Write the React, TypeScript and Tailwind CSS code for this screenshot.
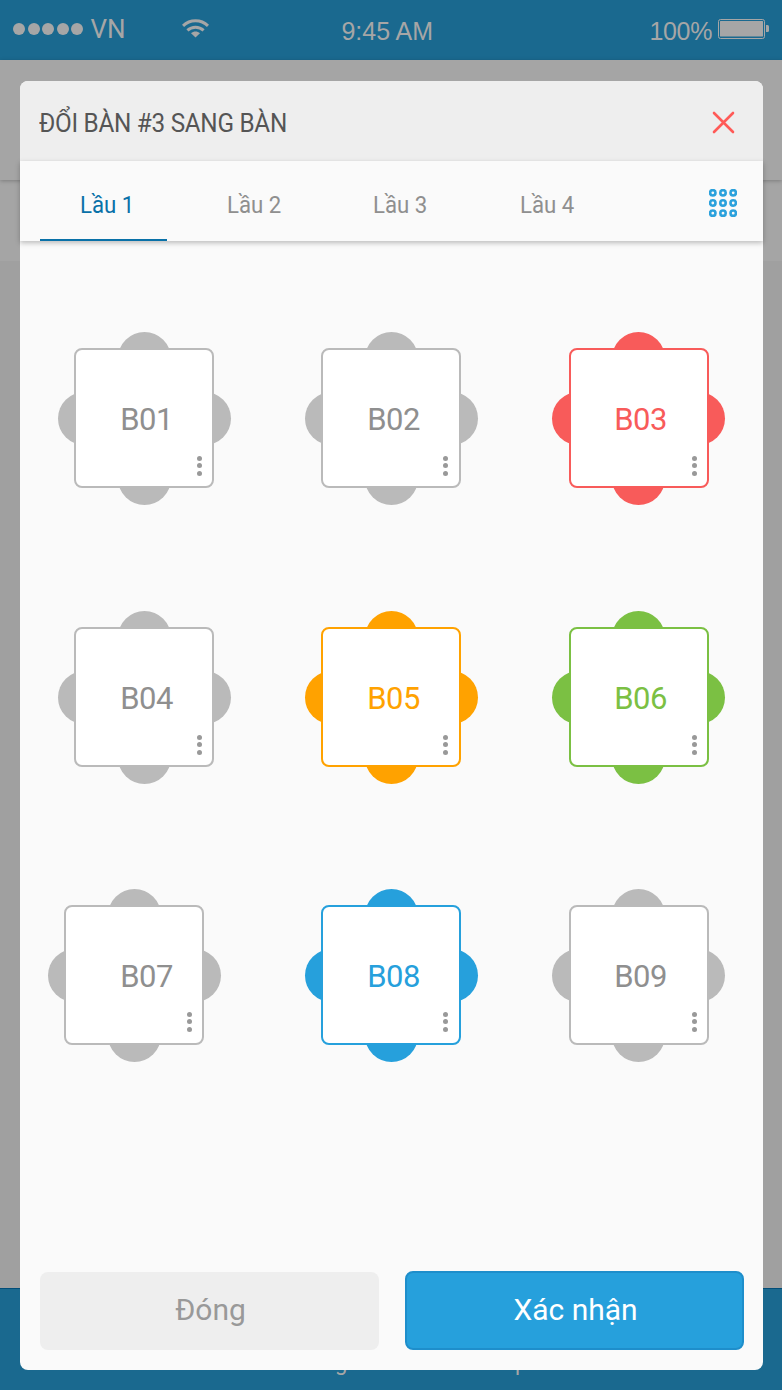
type Tone = "free" | "red" | "orange" | "green" | "blue";

type TableInfo = {
  name: string;
  tone: Tone;
  square: string;
  label: string;
  dots: string;
};

const tones: Record<Tone, { chair: string; border: string; text: string }> = {
  free: { chair: "bg-[#bababa]", border: "border-[#bababa]", text: "text-[#8f8f8f]" },
  red: { chair: "bg-[#f85b5a]", border: "border-[#f85b5a]", text: "text-[#f85b5a]" },
  orange: { chair: "bg-[#ffa200]", border: "border-[#ffa200]", text: "text-[#ffa200]" },
  green: { chair: "bg-[#7bc043]", border: "border-[#7bc043]", text: "text-[#7bc043]" },
  blue: { chair: "bg-[#26a0dc]", border: "border-[#26a0dc]", text: "text-[#26a0dc]" },
};

const tables: TableInfo[] = [
  { name: "B01", tone: "free", square: "ml-4", label: "pl-[5px]", dots: "right-[10px] bottom-[10px]" },
  { name: "B02", tone: "free", square: "ml-4", label: "pl-[5px]", dots: "right-[11px] bottom-[10px]" },
  { name: "B03", tone: "red", square: "ml-[17px]", label: "pl-[3px]", dots: "right-[10px] bottom-[10px]" },
  { name: "B04", tone: "free", square: "ml-4", label: "pl-[5px]", dots: "right-[10px] bottom-[10px]" },
  { name: "B05", tone: "orange", square: "ml-4", label: "pl-[5px]", dots: "right-[11px] bottom-[10px]" },
  { name: "B06", tone: "green", square: "ml-[17px]", label: "pl-[3px]", dots: "right-[10px] bottom-[10px]" },
  { name: "B07", tone: "free", square: "ml-4", label: "pl-[25px]", dots: "right-[10px] bottom-[11px]" },
  { name: "B08", tone: "blue", square: "ml-4", label: "pl-[5px]", dots: "right-[11px] bottom-[11px]" },
  { name: "B09", tone: "free", square: "ml-[17px]", label: "pl-[3px]", dots: "right-[10px] bottom-[11px]" },
];

const floors = ["Lầu 1", "Lầu 2", "Lầu 3", "Lầu 4"];

function StatusBar() {
  return (
    <header className="flex h-[60px] items-start bg-[#1a698f] text-[#a6a6a6]">
      <div className="mt-[23px] ml-[13px] flex gap-[2.6px]">
        {[0, 1, 2, 3, 4].map((n) => (
          <span key={n} className="size-3 rounded-full bg-[#a6a6a6]" />
        ))}
      </div>
      <span className="mt-[14px] ml-[7px] w-[92px] text-[26px] leading-[30px]">VN</span>
      <svg className="mt-[18px] h-5 w-[27px]" viewBox="0 0 27 20" fill="none" stroke="#a6a6a6" strokeWidth="3">
        <path d="M1 7.8C8 1 19 1 26 7.8" />
        <path d="M5.4 12.400C10 8.200 17 8.200 21.6 12.400" />
        <path d="M9 15.2c2.700-2.300 6.300-2.300 9 0L13.500 19.600Z" fill="#a6a6a6" stroke="none" />
      </svg>
      <span className="mt-4 ml-[132px] w-[308px] font-['Liberation_Sans',sans-serif] text-[25px] leading-[30px]">
        9:45 AM
      </span>
      <span className="mt-4 w-[69px] font-['Liberation_Sans',sans-serif] text-[25px] leading-[30px] tracking-[-0.3px]">
        100%
      </span>
      <svg className="mt-[19px] h-5 w-[51px]" viewBox="0 0 51 20">
        <rect x=".5" y=".5" width="46" height="19" rx="2" fill="none" stroke="#a6a6a6" />
        <rect x="2" y="2" width="43" height="15.500" rx=".5" fill="#a6a6a6" />
        <path d="M48 6h1.500a1.500 1.500 0 0 1 1.500 1.500v4a1.500 1.500 0 0 1-1.500 1.500H48Z" fill="#a6a6a6" />
      </svg>
    </header>
  );
}

function Table({ name, tone, square, label, dots }: TableInfo) {
  const c = tones[tone];
  return (
    <div className={`relative size-[173px] pt-4 ${name === "B07" ? "-ml-[10px]" : ""}`}>
      <span className={`absolute top-0 left-[60px] size-[53px] rounded-full ${c.chair}`} />
      <span className={`absolute bottom-0 left-[60px] size-[53px] rounded-full ${c.chair}`} />
      <span className={`absolute top-[60px] left-0 size-[53px] rounded-full ${c.chair}`} />
      <span className={`absolute top-[60px] right-0 size-[53px] rounded-full ${c.chair}`} />
      <div
        className={`relative flex size-[140px] items-center justify-center rounded-lg border-2 bg-white ${c.border} ${square}`}
      >
        <span className={`pt-[3px] text-[31px] leading-9 tracking-[-0.5px] ${c.text} ${label}`}>{name}</span>
        <div className={`absolute flex flex-col gap-[2.6px] ${dots}`}>
          <span className="size-[5px] rounded-full bg-[#999]" />
          <span className="size-[5px] rounded-full bg-[#999]" />
          <span className="size-[5px] rounded-full bg-[#999]" />
        </div>
      </div>
    </div>
  );
}

export default function App() {
  return (
    <div className="relative flex h-[1390px] w-[782px] flex-col overflow-hidden bg-[#a0a0a0] font-['Roboto',sans-serif]">
      <StatusBar />
      <div className="relative h-[120px] bg-[#a5a5a5] shadow-[0_1px_4px_rgba(0,0,0,0.25)]" />
      <div className="h-[81px] bg-[#a5a5a5]" />
      <div className="flex-1" />
      <footer className="flex h-[102px] items-end border-t border-[#024d78] bg-[#1a698f] text-[22px] leading-[30px] text-[#a6a6a6]">
        <span className="mb-[12px] ml-[335px] w-[180px]">g</span>
        <span className="mb-[12px]">p</span>
      </footer>

      <section className="absolute top-[81px] left-5 flex h-[1289px] w-[743px] flex-col rounded-lg bg-[#fafafa]">
        <div className="flex h-20 items-center justify-between rounded-t-lg bg-[#eee] pr-7 pl-[19px]">
          <h1 className="origin-left scale-x-[0.935] pt-1 text-[26px] leading-8 tracking-[-0.3px] text-[#555]">
            ĐỔI BÀN #3 SANG BÀN
          </h1>
          <svg className="mt-[3px] size-[23px]" viewBox="0 0 23 23" stroke="#ff5a57" strokeWidth="2.600" strokeLinecap="round">
            <path d="m2 2 19 19M21 2 2 21" />
          </svg>
        </div>

        <nav className="flex h-20 items-stretch gap-[19.7px] bg-[#fafafa] pr-[26px] pl-5 text-2xl text-[#8f8f8f] shadow-[0_2px_5px_rgba(0,0,0,0.25)]">
          {floors.map((floor, i) => (
            <div
              key={floor}
              className={`w-[127px] pt-7 pl-[40px] ${i === 0 ? "border-b-2 border-[#0971a8] text-[#0971a8]" : ""}`}
            >
              <span className="inline-block origin-left scale-x-[0.925]">{floor}</span>
            </div>
          ))}
          <svg className="mt-7 ml-auto size-7" viewBox="0 0 28 28" fill="none" stroke="#2ba1dc" strokeWidth="2.600">
            {[3.8, 14, 24.2].map((y) => [3.8, 14, 24.2].map((x) => <circle key={`${x}-${y}`} cx={x} cy={y} r="2.700" />))}
          </svg>
        </nav>

        <div className="grid flex-1 grid-cols-[247px_247px_173px] grid-rows-[279px_278px_173px] pt-[91px] pl-[38px]">
          {tables.map((t) => (
            <Table key={t.name} {...t} />
          ))}
        </div>

        <div className="flex items-end gap-[26px] px-5 pb-5 text-[30px]">
          <button className="h-[78px] w-[339px] rounded-lg bg-[#eee] pb-[4px] pl-[2px] text-[#999]">Đóng</button>
          <button className="-mr-px h-[79px] w-[339px] rounded-lg border-2 border-[#1e8ecb] bg-[#26a0dc] pb-[3px] pl-[2px] text-white">
            Xác nhận
          </button>
        </div>
      </section>
    </div>
  );
}
